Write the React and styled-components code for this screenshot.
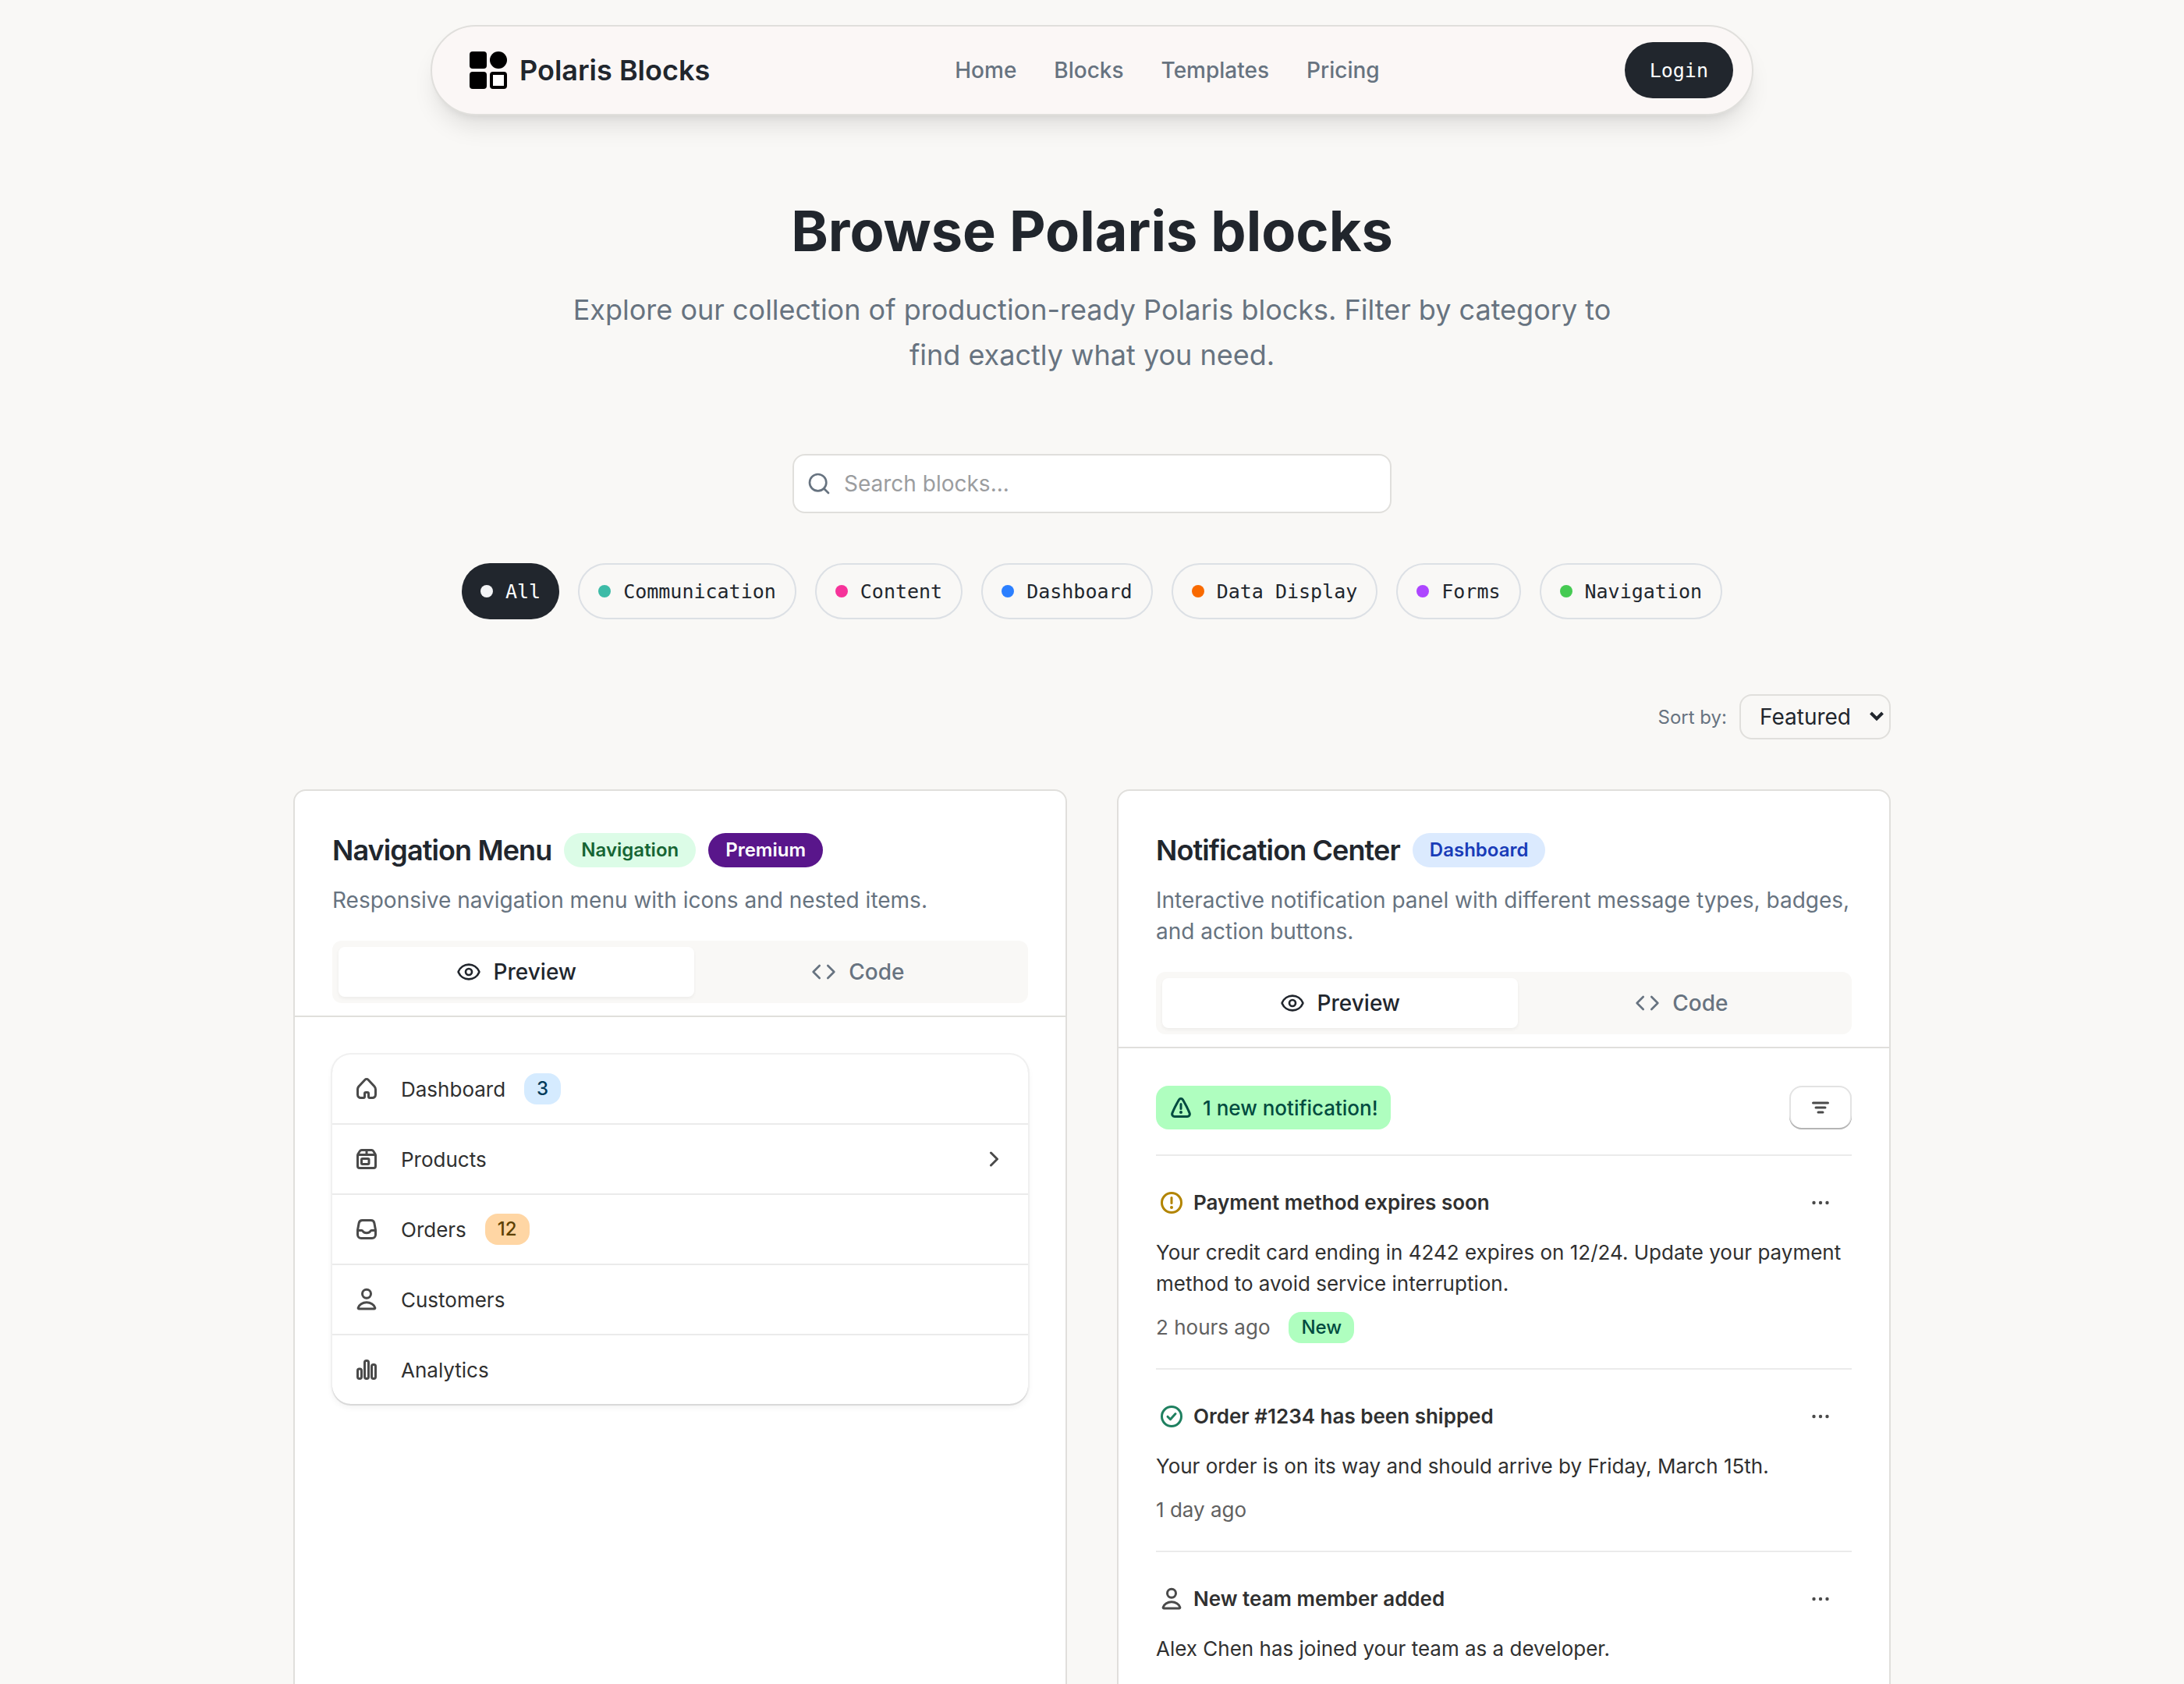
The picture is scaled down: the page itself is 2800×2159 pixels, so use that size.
import React from 'react'
import styled, { createGlobalStyle } from 'styled-components'
import { Search, Eye, Code } from 'lucide-react'

const GlobalStyle = createGlobalStyle`
    *{
        box-sizing: border-box;
        margin: 0;
        padding: 0;
    }
    body{
        background: #f9f8f6;
        color: #21262d;
        font-family: Inter, "Liberation Sans", sans-serif;
        -webkit-font-smoothing: antialiased;
    }
    button, input, select{
        font-family: inherit;
    }
    ul{
        list-style: none;
    }
`

const Icon = ({ children }) => (
    <IconSvg viewBox="0 0 20 20" fill="none" stroke="currentColor" strokeWidth="1.5" strokeLinecap="round" strokeLinejoin="round" aria-hidden="true">
        {children}
    </IconSvg>
)

const HomeIcon = () => (
    <Icon>
        <path fill="currentColor" stroke="none" fillRule="evenodd" d="M8.344 3.692a2.25 2.25 0 0 1 3.312 0l3.854 4.19a3.75 3.75 0 0 1 .99 2.538v3.33a2.75 2.75 0 0 1-2.75 2.75h-1.75a1.5 1.5 0 0 1-1.5-1.5v-2h-1v2a1.5 1.5 0 0 1-1.5 1.5h-1.75a2.75 2.75 0 0 1-2.75-2.75v-3.33c0-.94.353-1.846.99-2.539l3.854-4.189Zm2.208 1.016a.75.75 0 0 0-1.104 0l-3.854 4.189a2.25 2.25 0 0 0-.594 1.523v3.33c0 .69.56 1.25 1.25 1.25h1.75v-2a1.5 1.5 0 0 1 1.5-1.5h1a1.5 1.5 0 0 1 1.5 1.5v2h1.75c.69 0 1.25-.56 1.25-1.25v-3.33a2.25 2.25 0 0 0-.594-1.523l-3.854-4.19Z" />
    </Icon>
)

const ProductIcon = () => (
    <Icon>
        <path d="M4.25 7.6c0-.3.08-.6.24-.87l1.2-1.86a1.35 1.35 0 0 1 1.14-.62h6.34c.46 0 .89.23 1.14.62l1.2 1.86c.16.26.24.56.24.87v6.9c0 .7-.55 1.25-1.25 1.25h-9c-.7 0-1.25-.55-1.25-1.25zM4.5 7.25h11M10 4.25v3" />
        <rect x="6.75" y="9.75" width="4.75" height="3.5" rx=".6" />
    </Icon>
)

const OrderIcon = () => (
    <Icon>
        <path d="M4.25 10.5l.8-4.4a2.25 2.25 0 0 1 2.2-1.85h5.5a2.25 2.25 0 0 1 2.2 1.85l.8 4.4v3a2.25 2.25 0 0 1-2.25 2.25h-7a2.25 2.25 0 0 1-2.25-2.25zM4.25 10.75h2.6c.35 0 .6.2.75.5.4.7 1.2 1.1 2.4 1.1s2-.4 2.4-1.1c.15-.3.4-.5.75-.5h2.6" />
    </Icon>
)

const PersonIcon = () => (
    <Icon>
        <circle cx="10" cy="6.4" r="2.75" />
        <path d="M4.6 15.3c.6-1.9 2.8-3.4 5.4-3.4s4.8 1.5 5.4 3.4c.12.4-.15.75-.55.75h-9.7c-.4 0-.67-.35-.55-.75z" />
    </Icon>
)

const ChartIcon = () => (
    <Icon>
        <rect x="4.25" y="9.5" width="2.5" height="6.25" rx="1.1" />
        <rect x="8.75" y="4.25" width="2.5" height="11.5" rx="1.1" />
        <rect x="13.25" y="6.75" width="2.5" height="9" rx="1.1" />
    </Icon>
)

const ChevronIcon = () => (
    <Icon><path d="M8.25 6l4 4-4 4" /></Icon>
)

const WarningIcon = () => (
    <Icon>
        <path d="M8.75 4.95c.55-.95 1.95-.95 2.5 0 1.7 2.9 3.1 5.5 4.3 8.6.42 1.1-.36 2.2-1.5 2.2h-8.1c-1.14 0-1.92-1.1-1.5-2.2 1.2-3.1 2.6-5.7 4.3-8.6zM10 7.75v3" />
        <circle cx="10" cy="13" r="1" fill="currentColor" stroke="none" />
    </Icon>
)

const AlertIcon = () => (
    <Icon>
        <circle cx="10" cy="10" r="6.25" />
        <path d="M10 6.75v3.5" />
        <circle cx="10" cy="13" r="1" fill="currentColor" stroke="none" />
    </Icon>
)

const CheckIcon = () => (
    <Icon>
        <circle cx="10" cy="10" r="6.25" />
        <path d="M7.5 10.1l1.75 1.75 3.25-3.6" />
    </Icon>
)

const FilterIcon = () => (
    <Icon><path d="M5.25 7h9.500M7 10h6M8.5 13h3" /></Icon>
)

const DotsIcon = () => (
    <Icon>
        <g fill="currentColor" stroke="none">
            <circle cx="5.75" cy="10" r="1.1" />
            <circle cx="10" cy="10" r="1.1" />
            <circle cx="14.25" cy="10" r="1.1" />
        </g>
    </Icon>
)

const Logo = () => (
    <svg width="48" height="48" viewBox="0 0 48 48" aria-hidden="true">
        <rect width="22" height="22" rx="4" />
        <circle cx="37" cy="11" r="11" />
        <rect y="26" width="22" height="22" rx="4" />
        <rect x="28" y="28" width="18" height="18" rx="2" fill="#fff" stroke="#000" strokeWidth="4" />
    </svg>
)

const links = ['Home', 'Blocks', 'Templates', 'Pricing']

const categories = [
    { name: 'All', color: '#f3f4f6', active: true },
    { name: 'Communication', color: '#3dbba7' },
    { name: 'Content', color: '#f6339a' },
    { name: 'Dashboard', color: '#2b7fff' },
    { name: 'Data Display', color: '#f96a00' },
    { name: 'Forms', color: '#ad46ff' },
    { name: 'Navigation', color: '#45ca52' },
]

const menu = [
    { label: 'Dashboard', icon: <HomeIcon />, count: '3', tone: 'info' },
    { label: 'Products', icon: <ProductIcon />, nested: true },
    { label: 'Orders', icon: <OrderIcon />, count: '12', tone: 'attention' },
    { label: 'Customers', icon: <PersonIcon /> },
    { label: 'Analytics', icon: <ChartIcon /> },
]

const notifications = [
    {
        id: 1,
        title: 'Payment method expires soon',
        text: 'Your credit card ending in 4242 expires on 12/24. Update your payment method to avoid service interruption.',
        time: '2 hours ago',
        icon: <AlertIcon />,
        color: '#b28400',
        isNew: true,
    },
    {
        id: 2,
        title: 'Order #1234 has been shipped',
        text: 'Your order is on its way and should arrive by Friday, March 15th.',
        time: '1 day ago',
        icon: <CheckIcon />,
        color: '#1f8060',
    },
    {
        id: 3,
        title: 'New team member added',
        text: 'Alex Chen has joined your team as a developer.',
        icon: <PersonIcon />,
        color: '#4a4a4a',
    },
]

const BlockCard = ({ title, tags, description, children }) => (
    <Card>
        <CardHeader>
            <TitleRow>
                <CardTitle>{title}</CardTitle>
                {tags.map(({ name, tone }) => <Tag key={name} $tone={tone}>{name}</Tag>)}
            </TitleRow>
            <Description>{description}</Description>
            <Tabs role="tablist">
                <Tab role="tab" aria-selected="true" $active><Eye size={32} />Preview</Tab>
                <Tab role="tab" aria-selected="false"><Code size={32} />Code</Tab>
            </Tabs>
        </CardHeader>
        <CardBody>{children}</CardBody>
    </Card>
)

const App = () => {
    return (
        <Page>
            <GlobalStyle />
            <Navbar>
                <Brand href="#"><Logo />Polaris Blocks</Brand>
                <NavLinks>
                    {links.map((link) => <a key={link} href="#">{link}</a>)}
                </NavLinks>
                <LoginButton>Login</LoginButton>
            </Navbar>
            <Main>
                <Hero>
                    <h1>Browse Polaris blocks</h1>
                    <p>Explore our collection of production-ready Polaris blocks. Filter by category to find exactly what you need.</p>
                </Hero>
                <SearchBox>
                    <Search size={32} aria-hidden="true" />
                    <input type="text" placeholder="Search blocks..." aria-label="Search blocks" />
                </SearchBox>
                <Chips>
                    {categories.map(({ name, color, active }) => (
                        <Chip key={name} $active={active}><Dot $color={color} />{name}</Chip>
                    ))}
                </Chips>
                <SortRow>
                    <label htmlFor="sort">Sort by:</label>
                    <SelectWrap>
                        <select id="sort" defaultValue="Featured">
                            <option>Featured</option>
                        </select>
                        <svg width="20" height="14" viewBox="0 0 20 14" aria-hidden="true">
                            <path d="M2.5 2l7.5 7.500L17.500 2" fill="none" stroke="#21262d" strokeWidth="4" />
                        </svg>
                    </SelectWrap>
                </SortRow>
                <Grid>
                    <BlockCard
                        title="Navigation Menu"
                        tags={[{ name: 'Navigation', tone: 'green' }, { name: 'Premium', tone: 'purple' }]}
                        description="Responsive navigation menu with icons and nested items."
                    >
                        <Menu>
                            {menu.map(({ label, icon, count, tone, nested }) => (
                                <MenuItem key={label}>
                                    {icon}
                                    <span>{label}</span>
                                    {count && <Badge $tone={tone}>{count}</Badge>}
                                    {nested && <ChevronIcon />}
                                </MenuItem>
                            ))}
                        </Menu>
                    </BlockCard>
                    <BlockCard
                        title="Notification Center"
                        tags={[{ name: 'Dashboard', tone: 'blue' }]}
                        description="Interactive notification panel with different message types, badges, and action buttons."
                    >
                        <PanelTop>
                            <NewBanner><WarningIcon />1 new notification!</NewBanner>
                            <FilterButton aria-label="Filter"><FilterIcon /></FilterButton>
                        </PanelTop>
                        <ul>
                            {notifications.map(({ id, title, text, time, icon, color, isNew }) => (
                                <Notice key={id}>
                                    <NoticeHead $color={color}>
                                        {icon}
                                        <h3>{title}</h3>
                                        <MoreButton aria-label="More actions"><DotsIcon /></MoreButton>
                                    </NoticeHead>
                                    <p>{text}</p>
                                    {time && (
                                        <NoticeMeta>
                                            <span>{time}</span>
                                            {isNew && <Badge $tone="success">New</Badge>}
                                        </NoticeMeta>
                                    )}
                                </Notice>
                            ))}
                        </ul>
                    </BlockCard>
                </Grid>
            </Main>
        </Page>
    )
}

export default App

const tagTones = {
    green: 'background: #dcfce7; color: #166534;',
    purple: 'background: #59168b; color: #fff;',
    blue: 'background: #dbeafe; color: #193cb8;',
}

const badgeTones = {
    info: 'background: #d5ebff; color: #003a5a;',
    attention: 'background: #ffd6a4; color: #5e4200;',
    success: 'background: #affebf; color: #014b40;',
}

const IconSvg = styled.svg`
    width: 40px;
    height: 40px;
    flex-shrink: 0;
    display: block;
`

/* the page scrolls inside the window */
const Page = styled.div`
    height: 100vh;
    overflow-y: auto;
    scrollbar-width: none;
    padding: 32px 64px;
`

const Navbar = styled.header`
    max-width: 1696px;
    margin: 0 auto;
    padding: 20px 24px 20px 48px;
    display: flex;
    align-items: center;
    justify-content: space-between;
    background: #fbf7f6;
    border: 2px solid #e0dfdc;
    border-radius: 58px;
    box-shadow: 0 20px 30px -6px rgba(0, 0, 0, 0.1), 0 8px 12px -8px rgba(0, 0, 0, 0.1);
`

const Brand = styled.a`
    display: flex;
    align-items: center;
    gap: 16px;
    font-size: 36px;
    font-weight: 600;
    color: #21262d;
    text-decoration: none;
`

const NavLinks = styled.nav`
    display: flex;
    gap: 48px;
    a{
        font-size: 28px;
        font-weight: 500;
        color: #677380;
        text-decoration: none;
    }
`

const LoginButton = styled.button`
    height: 72px;
    padding: 0 32px;
    border: none;
    border-radius: 36px;
    background: #21262d;
    color: #fff;
    && {
        font-family: "DejaVu Sans Mono", monospace;
    }
    font-size: 25px;
`

const Main = styled.main`
    max-width: 2048px;
    margin: 0 auto;
    padding-top: 112px;
`

const Hero = styled.section`
    text-align: center;
    max-width: 1344px;
    margin: 0 auto 98px;
    h1{
        font-size: 72px;
        line-height: 72px;
        font-weight: 700;
        margin-bottom: 36px;
    }
    p{
        font-size: 36px;
        line-height: 58px;
        color: #677380;
    }
`

const SearchBox = styled.div`
    display: flex;
    align-items: center;
    gap: 16px;
    max-width: 768px;
    height: 76px;
    margin: 0 auto 64px;
    padding: 0 16px;
    background: #fff;
    border: 2px solid #e0dfdc;
    border-radius: 16px;
    color: #677380;
    input{
        flex: 1;
        border: none;
        outline: none;
        background: none;
        font-size: 28px;
        color: #21262d;
        &::placeholder{
            color: #9b9d9f;
        }
    }
`

const Chips = styled.div`
    display: flex;
    flex-wrap: wrap;
    justify-content: center;
    gap: 24px;
    margin-bottom: 96px;
`

const Chip = styled.button`
    display: flex;
    align-items: center;
    gap: 16px;
    height: 72px;
    padding: 0 24px;
    border: ${({ $active }) => ($active ? 'none' : '2px solid #dce0e5')};
    border-radius: 36px;
    background: ${({ $active }) => ($active ? '#21262d' : 'transparent')};
    color: ${({ $active }) => ($active ? '#fff' : '#21262d')};
    && {
        font-family: "DejaVu Sans Mono", monospace;
    }
    font-size: 25px;
`

const Dot = styled.span`
    width: 16px;
    height: 16px;
    border-radius: 50%;
    background: ${({ $color }) => $color};
`

const SortRow = styled.div`
    display: flex;
    justify-content: flex-end;
    align-items: center;
    gap: 16px;
    margin-bottom: 64px;
    label{
        font-size: 24px;
        color: #677380;
    }
`

const SelectWrap = styled.div`
    position: relative;
    select{
        appearance: none;
        display: block;
        width: 194px;
        height: 58px;
        padding: 0 24px;
        font-size: 28px;
        color: #21262d;
        background: transparent;
        border: 2px solid #e0dfdc;
        border-radius: 16px;
    }
    svg{
        position: absolute;
        right: 8px;
        top: 22px;
        pointer-events: none;
    }
`

const Grid = styled.div`
    display: grid;
    grid-template-columns: repeat(2, minmax(0, 1fr));
    gap: 64px;
`

const Card = styled.article`
    background: #fff;
    border: 2px solid #e0dfdc;
    border-radius: 16px;
`

const CardHeader = styled.div`
    padding: 48px 48px 16px;
    border-bottom: 2px solid #e0dfdc;
`

const TitleRow = styled.div`
    display: flex;
    align-items: center;
    gap: 16px;
    margin-bottom: 16px;
`

const CardTitle = styled.h2`
    font-size: 36px;
    line-height: 56px;
    font-weight: 600;
    letter-spacing: -0.025em;
`

const Tag = styled.span`
    padding: 0 22px;
    border-radius: 22px;
    font-size: 24px;
    line-height: 44px;
    font-weight: 600;
    ${({ $tone }) => tagTones[$tone]}
`

const Description = styled.p`
    font-size: 28px;
    line-height: 40px;
    color: #677380;
    margin-bottom: 32px;
`

const Tabs = styled.div`
    display: flex;
    padding: 8px;
    border-radius: 12px;
    background: #f9f8f6;
`

const Tab = styled.button`
    flex: 1 1 auto;
    display: flex;
    align-items: center;
    justify-content: center;
    gap: 16px;
    height: 64px;
    border: none;
    border-radius: 8px;
    font-size: 28px;
    font-weight: 500;
    background: ${({ $active }) => ($active ? '#fff' : 'transparent')};
    color: ${({ $active }) => ($active ? '#21262d' : '#677380')};
    box-shadow: ${({ $active }) => ($active ? '0 2px 4px rgba(0, 0, 0, 0.05)' : 'none')};
`

const CardBody = styled.div`
    padding: 48px;
    color: #303030;
`

const Menu = styled.ul`
    border-radius: 24px;
    box-shadow: 0 2px 0 #d9d9d9, 0 0 0 2px #f0f0f0, 0 4px 8px rgba(0, 0, 0, 0.06);
`

const MenuItem = styled.li`
    display: flex;
    align-items: center;
    gap: 24px;
    height: 90px;
    padding: 0 24px;
    border-bottom: 2px solid #ebebeb;
    font-size: 26px;
    &:last-child{
        height: 88px;
        border-bottom: none;
    }
    svg{
        color: #4a4a4a;
    }
    svg:last-child{
        margin-left: auto;
    }
`

const Badge = styled.span`
    padding: 0 16px;
    border-radius: 16px;
    font-size: 24px;
    line-height: 40px;
    font-weight: 500;
    ${({ $tone }) => badgeTones[$tone]}
`

const PanelTop = styled.div`
    display: flex;
    justify-content: space-between;
    align-items: center;
    padding-bottom: 32px;
    border-bottom: 2px solid #ebebeb;
`

const NewBanner = styled.div`
    display: flex;
    align-items: center;
    gap: 8px;
    height: 56px;
    padding: 0 16px 0 12px;
    border-radius: 16px;
    font-size: 26px;
    font-weight: 500;
    ${badgeTones.success}
`

const FilterButton = styled.button`
    display: flex;
    align-items: center;
    justify-content: center;
    width: 80px;
    height: 56px;
    border: none;
    border-radius: 16px;
    background: #fff;
    color: #4a4a4a;
    box-shadow: inset 0 -2px 0 #b5b5b5, inset 0 0 0 2px #e3e3e3;
`

const Notice = styled.li`
    padding: 32px 0;
    border-bottom: 2px solid #ebebeb;
    font-size: 26px;
    line-height: 40px;
    &:last-child{
        border-bottom: none;
    }
`

const NoticeHead = styled.div`
    display: flex;
    align-items: center;
    gap: 8px;
    height: 56px;
    margin-bottom: 16px;
    > svg{
        color: ${({ $color }) => $color};
    }
    h3{
        flex: 1;
        font-size: 26px;
        font-weight: 600;
    }
`

const MoreButton = styled.button`
    display: flex;
    align-items: center;
    justify-content: center;
    width: 80px;
    height: 56px;
    border: none;
    background: none;
    color: #4a4a4a;
`

const NoticeMeta = styled.div`
    display: flex;
    align-items: center;
    gap: 24px;
    margin-top: 16px;
    color: #616161;
`
